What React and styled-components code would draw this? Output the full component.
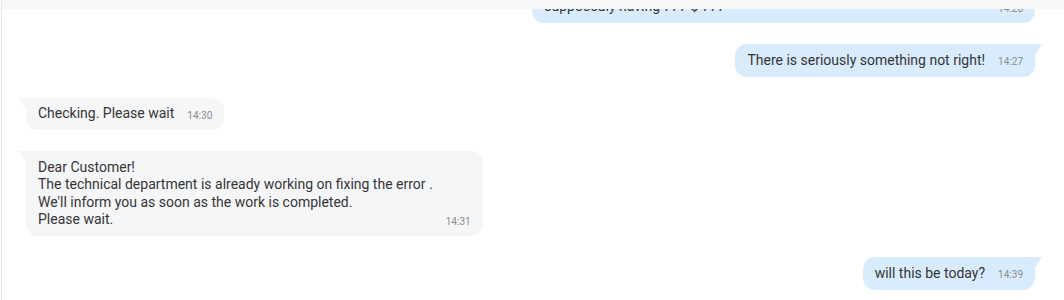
import React from "react";
import styled, { createGlobalStyle } from "styled-components";

const GlobalStyle = createGlobalStyle`
  * { box-sizing: border-box; }
  body {
    margin: 0;
    background: #ffffff;
    font-family: Roboto, "Noto Sans", Arial, sans-serif;
  }
`;

const messages = [
  { id: 1, out: true, time: "14:26", text: "Let me check the balance again, my account shows the payments were\nsupposedly having 777 $ 777" },
  { id: 2, out: true, time: "14:27", text: "There is seriously something not right!" },
  { id: 3, out: false, time: "14:30", text: "Checking. Please wait" },
  {
    id: 4,
    out: false,
    time: "14:31",
    text: "Dear Customer!\nThe technical department is already working on fixing the error .\nWe'll inform you as soon as the work is completed.\nPlease wait.",
  },
  { id: 5, out: true, time: "14:39", text: "will this be today?" },
];

export default function App() {
  return (
    <>
      <GlobalStyle />
      <Pane>
        <TopBar />
        <Feed>
          <List>
            {messages.map((m) => (
              <Row key={m.id} $out={m.out}>
                <Bubble $out={m.out}>
                  <Text>{m.text}</Text>
                  <Time>{m.time}</Time>
                </Bubble>
              </Row>
            ))}
          </List>
        </Feed>
      </Pane>
    </>
  );
}

const Pane = styled.div`
  height: 300px;
  margin-left: 1px;
  border-left: 1px solid #e6e7ec;
  display: flex;
  flex-direction: column;
  overflow: hidden;
`;

const TopBar = styled.div`
  height: 9px;
  flex: none;
  background: #f6f7f9;
`;

const Feed = styled.div`
  flex: 1;
  overflow: hidden;
`;

const List = styled.div`
  margin-top: -36px;
  display: flex;
  flex-direction: column;
  gap: 21px;
  padding: 0 29px 0 24px;
`;

const Row = styled.div`
  display: flex;
  justify-content: ${(p) => (p.$out ? "flex-end" : "flex-start")};
`;

const Bubble = styled.div`
  position: relative;
  display: flex;
  align-items: flex-end;
  gap: 13px;
  padding: 7.5px 12px;
  background: ${(p) => (p.$out ? "#d9ecfd" : "#f5f6f8")};
  border-radius: ${(p) => (p.$out ? "12px 0 12px 12px" : "0 12px 12px 12px")};

  &::before {
    content: "";
    position: absolute;
    top: 0;
    ${(p) => (p.$out ? "right: -7px;" : "left: -8px;")}
    width: 0;
    height: 0;
    border-top: 11px solid ${(p) => (p.$out ? "#d9ecfd" : "#f5f6f8")};
    ${(p) =>
      p.$out
        ? "border-right: 7px solid transparent;"
        : "border-left: 8px solid transparent;"}
  }
`;

const Text = styled.div`
  font-size: 14px;
  line-height: 17.5px;
  color: #353535;
  white-space: pre-line;
`;

const Time = styled.span`
  flex: none;
  font-size: 10px;
  line-height: 14px;
  color: #8c8c8c;
`;
